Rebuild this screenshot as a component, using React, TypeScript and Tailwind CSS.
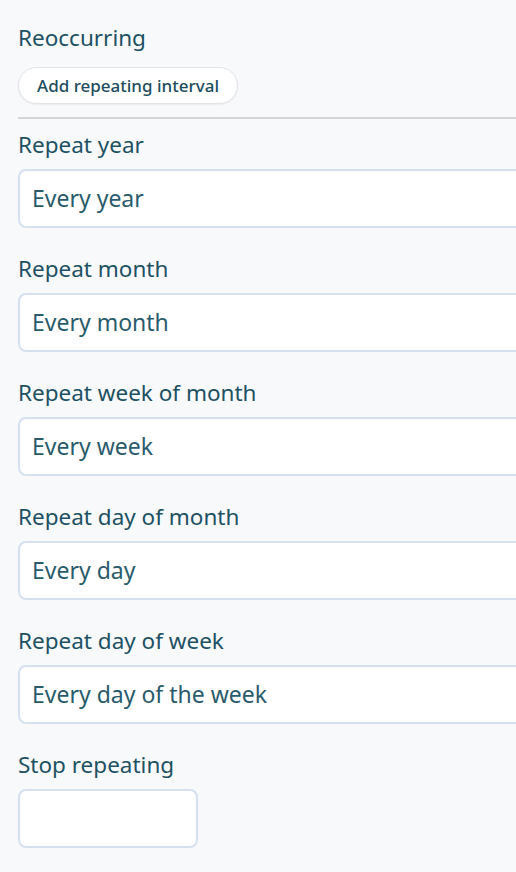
import React from "react";

const fields = [
  { label: "Repeat year", value: "Every year" },
  { label: "Repeat month", value: "Every month" },
  { label: "Repeat week of month", value: "Every week" },
  { label: "Repeat day of month", value: "Every day" },
  { label: "Repeat day of week", value: "Every day of the week" },
];

export default function App() {
  return (
    <div
      className="w-[516px] h-[872px] overflow-hidden bg-[#f8f9fb] text-[#1d5163]"
      style={{ fontFamily: "'Noto Sans', sans-serif" }}
    >
      <div className="pl-[18px] pt-[26px] w-[620px]">
        <div className="text-[22.5px] leading-[24px]">Reoccurring</div>
        <button className="mt-[17px] h-[37px] px-[18px] rounded-full bg-white border border-[#e2e4e8] shadow-[0_1px_2px_rgba(0,0,0,0.06)] text-[17px] font-medium text-[#1d4d5e]">
          Add repeating interval
        </button>
        <div className="mt-[13px] h-[2px] bg-[#d3d5d9]" />
        <div className="pt-[14px]">
          {fields.map((f, i) => (
            <div key={f.label} className={i === 0 ? "" : "mt-[29px]"}>
              <div className="text-[22.5px] leading-[24px]">{f.label}</div>
              <div className="mt-[12px] h-[59px] rounded-[8px] border-2 border-[#d6e1f0] bg-white flex items-center pl-[12px] text-[23px] text-[#2a5b6c]">
                {f.value}
              </div>
            </div>
          ))}
          <div className="mt-[29px]">
            <div className="text-[22.5px] leading-[24px]">Stop repeating</div>
            <div className="mt-[12px] h-[59px] w-[180px] rounded-[8px] border-2 border-[#d6e1f0] bg-white" />
          </div>
        </div>
      </div>
    </div>
  );
}
